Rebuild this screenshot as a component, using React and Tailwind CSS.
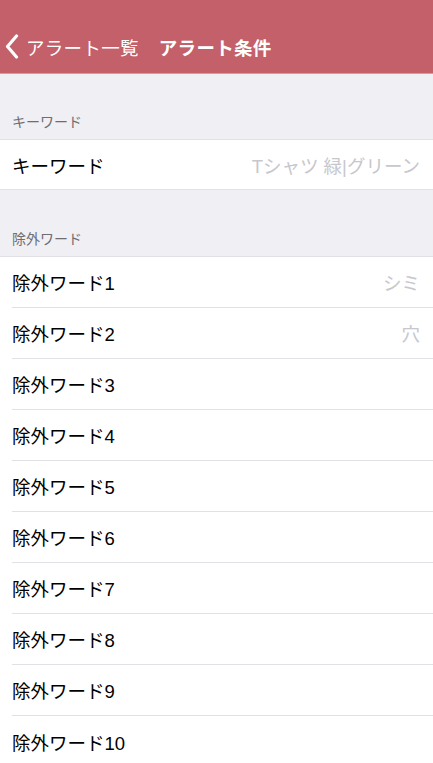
import React from "react";

const font = { fontFamily: '"Liberation Sans", "Noto Sans CJK JP", sans-serif' };

function Row({ label, value, last = false }) {
  return (
    <div className="bg-white pl-[12px]">
      <div
        className={
          "h-[51px] flex items-center justify-between pr-[13px] pt-[4px] " +
          (last ? "" : "border-b border-[#e0e0e5]")
        }
      >
        <span className="text-[18.5px] text-black">{label}</span>
        {value && <span className="text-[18.5px] text-[#c7c7cd]">{value}</span>}
      </div>
    </div>
  );
}

export default function App() {
  const rows = [
    ["除外ワード1", "シミ"],
    ["除外ワード2", "穴"],
    ["除外ワード3"],
    ["除外ワード4"],
    ["除外ワード5"],
    ["除外ワード6"],
    ["除外ワード7"],
    ["除外ワード8"],
    ["除外ワード9"],
    ["除外ワード10"],
  ];
  return (
    <div className="w-[433px] h-[763px] overflow-hidden bg-[#efeff4]" style={font}>
      <div className="bg-[#c4606a] pt-[24px] border-b border-[#d99aa1]">
        <div className="h-[49px] flex items-center text-white">
          <svg width="16" height="26" viewBox="0 0 16 26" className="ml-[4px] mr-[6px] -mt-[3px]">
            <path d="M12.5 2 L3.5 12.5 L12.5 23" fill="none" stroke="white" strokeWidth="3.2" strokeLinecap="round" strokeLinejoin="round" />
          </svg>
          <span className="text-[18.5px] tracking-[0.3px]">アラート一覧</span>
          <span className="text-[18.5px] font-bold ml-[20px] tracking-[0.3px]">アラート条件</span>
        </div>
      </div>

      <div className="h-[65px] flex items-end px-[12px] pb-[6px]">
        <span className="text-[14px] text-[#6d6d72]">キーワード</span>
      </div>
      <div className="bg-white border-t border-b border-[#e0e0e5] h-[51px] flex items-center justify-between pl-[12px] pr-[13px] pt-[4px]">
        <span className="text-[18.5px] text-black">キーワード</span>
        <span className="text-[18.5px] text-[#c7c7cd]">Tシャツ 緑|グリーン</span>
      </div>

      <div className="h-[66px] flex items-end px-[12px] pb-[6px]">
        <span className="text-[14px] text-[#6d6d72]">除外ワード</span>
      </div>
      <div className="border-t border-[#e0e0e5]">
        {rows.map(([l, v], i) => (
          <Row key={i} label={l} value={v} last={i === rows.length - 1} />
        ))}
      </div>
    </div>
  );
}
